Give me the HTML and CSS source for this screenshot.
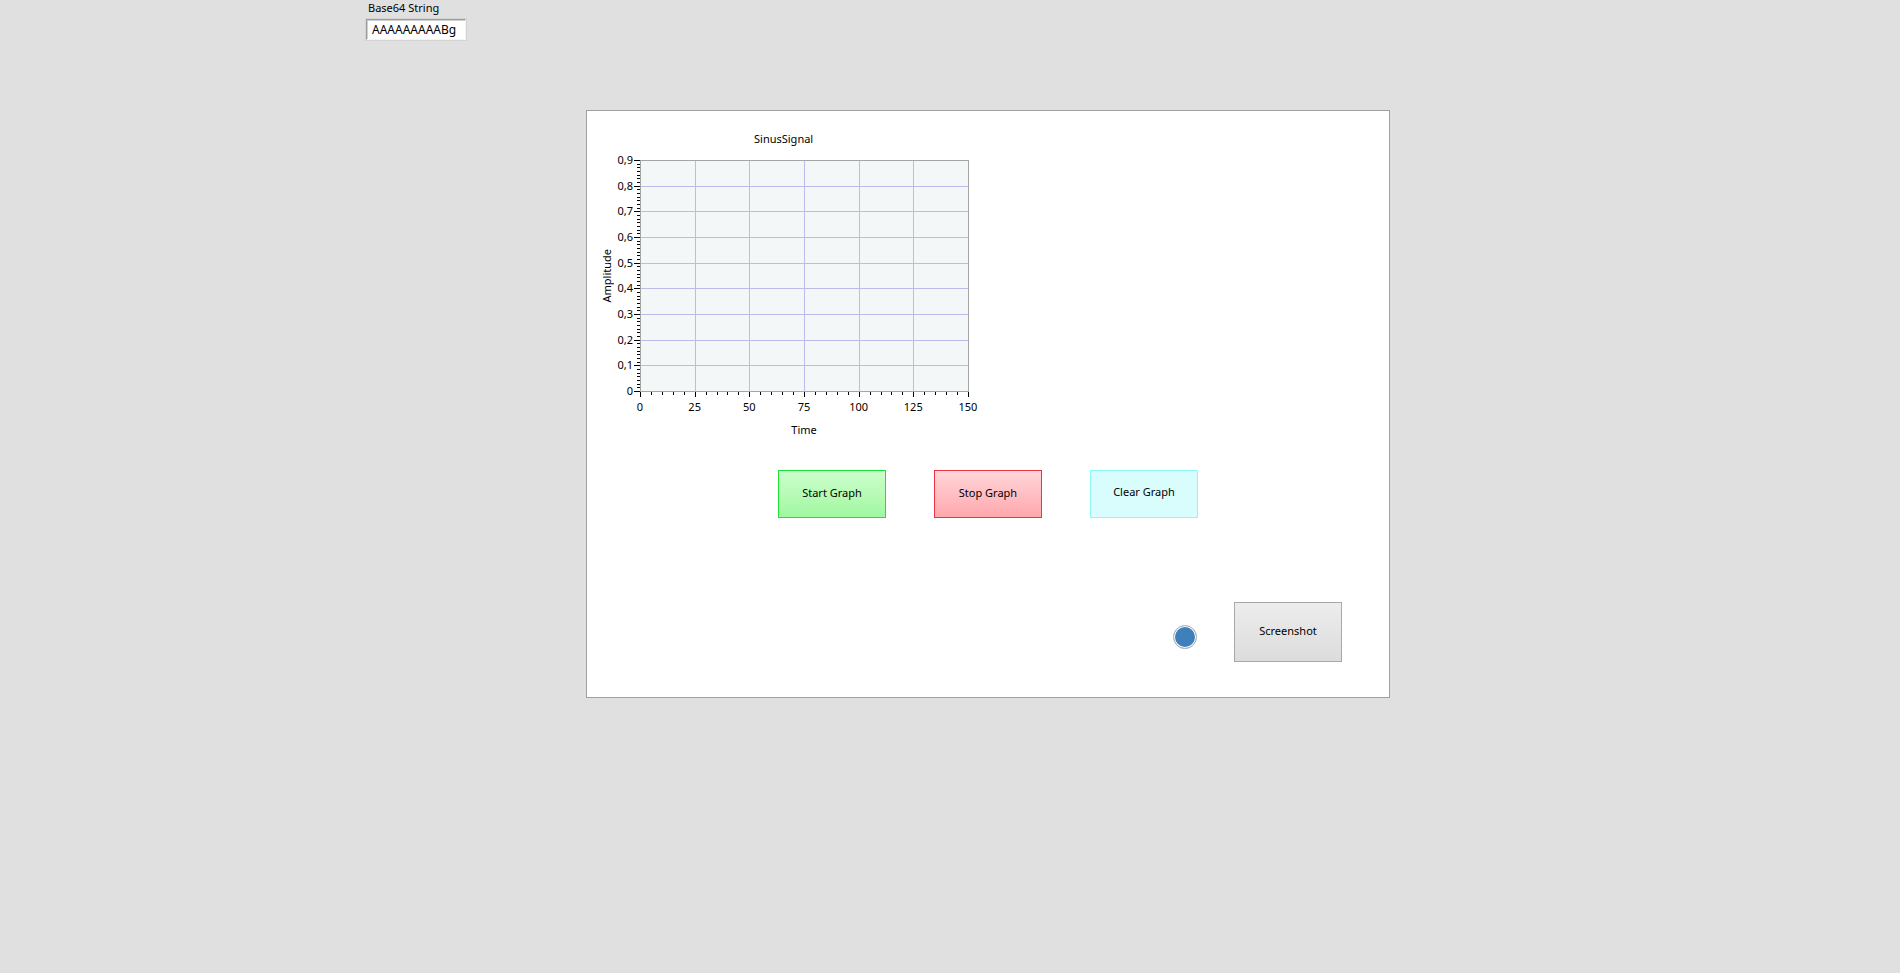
FILE: index.html
```html
<!DOCTYPE html>
<html>
<head>
<meta charset="utf-8">
<title>SinusSignal</title>
<link rel="stylesheet" href="styles.css">
</head>
<body>
<div class="string-ctl">
  <div class="ctl-label">Base64 String</div>
  <div class="string-box">AAAAAAAAABg</div>
</div>
<div class="panel">
  <div class="chart-title">SinusSignal</div>
  <div class="chart-body">
    <div class="y-title"><span>Amplitude</span></div>
    <div class="y-labels">
      <span>0,9</span><span>0,8</span><span>0,7</span><span>0,6</span><span>0,5</span><span>0,4</span><span>0,3</span><span>0,2</span><span>0,1</span><span>0</span>
    </div>
    <div class="plot-col">
      <svg class="plot" width="336" height="239" viewBox="634 160 336 239" shape-rendering="crispEdges">
        <rect x="640.5" y="160.5" width="328" height="231" fill="#f4f7f8" stroke="none"/>
        <path stroke="#bcbcec" stroke-width="1" fill="none" d="M695.5 161V391M749.5 161V391M804.5 161V391M859.5 161V391M913.5 161V391M641 186.5H968M641 211.5H968M641 237.5H968M641 263.5H968M641 288.5H968M641 314.5H968M641 340.5H968M641 365.5H968"/>
        <rect x="640.5" y="160.5" width="328" height="231" fill="none" stroke="#a4a4a4" stroke-width="1"/>
        <path stroke="#000" stroke-width="1" fill="none" d="M634 160.5h6M634 186.5h6M634 211.5h6M634 237.5h6M634 263.5h6M634 288.5h6M634 314.5h6M634 340.5h6M634 365.5h6M634 391.5h6
        M637 164.5h3M637 167.5h3M637 171.5h3M637 175.5h3M637 178.5h3M637 182.5h3
        M637 189.5h3M637 193.5h3M637 197.5h3M637 200.5h3M637 204.5h3M637 208.5h3
        M637 215.5h3M637 219.5h3M637 222.5h3M637 226.5h3M637 230.5h3M637 233.5h3
        M637 241.5h3M637 244.5h3M637 248.5h3M637 252.5h3M637 255.5h3M637 259.5h3
        M637 266.5h3M637 270.5h3M637 274.5h3M637 277.5h3M637 281.5h3M637 285.5h3
        M637 292.5h3M637 296.5h3M637 299.5h3M637 303.5h3M637 307.5h3M637 310.5h3
        M637 318.5h3M637 321.5h3M637 325.5h3M637 329.5h3M637 332.5h3M637 336.5h3
        M637 343.5h3M637 347.5h3M637 351.5h3M637 354.5h3M637 358.5h3M637 362.5h3
        M637 369.5h3M637 373.5h3M637 376.5h3M637 380.5h3M637 384.5h3M637 387.5h3
        M640.5 392v5M695.5 392v5M749.5 392v5M804.5 392v5M859.5 392v5M913.5 392v5M968.5 392v5
        M651.5 392v3M662.5 392v3M673.5 392v3M684.5 392v3
        M706.5 392v3M717.5 392v3M727.5 392v3M738.5 392v3
        M760.5 392v3M771.5 392v3M782.5 392v3M793.5 392v3
        M815.5 392v3M826.5 392v3M837.5 392v3M848.5 392v3
        M870.5 392v3M881.5 392v3M891.5 392v3M902.5 392v3
        M924.5 392v3M935.5 392v3M946.5 392v3M957.5 392v3"/>
      </svg>
      <div class="x-labels">
        <span>0</span><span>25</span><span>50</span><span>75</span><span>100</span><span>125</span><span>150</span>
      </div>
      <div class="x-title">Time</div>
    </div>
  </div>
  <div class="btn-row">
    <button class="btn btn-start">Start Graph</button>
    <button class="btn btn-stop">Stop Graph</button>
    <button class="btn btn-clear">Clear Graph</button>
  </div>
  <div class="bottom-row">
    <span class="led"></span>
    <button class="btn btn-shot">Screenshot</button>
  </div>
</div>
</body>
</html>
```

FILE: styles.css
```css
html, body {
  margin: 0;
  padding: 0;
}
body {
  width: 1900px;
  height: 973px;
  overflow: hidden;
  background: #e0e0e0;
  font-family: "Noto Sans", "Open Sans", sans-serif;
  font-size: 11px;
  color: #000;
}

.string-ctl {
  margin-left: 366px;
}
.ctl-label {
  line-height: 16px;
  padding-left: 2px;
  white-space: nowrap;
}
.string-box {
  margin-top: 3px;
  width: 100px;
  height: 21px;
  box-sizing: border-box;
  background: #fff;
  border: 1px solid;
  border-color: #9c9c9c #f4f4f4 #f4f4f4 #9c9c9c;
  box-shadow: inset 1px 1px 0 #d0d0d0, 0 0 0 1px #d4d4d4;
  font-size: 12px;
  line-height: 19px;
  padding-left: 5px;
  white-space: nowrap;
  overflow: hidden;
}

.panel {
  margin-top: 70px;
  margin-left: 586px;
  width: 804px;
  height: 588px;
  box-sizing: border-box;
  border: 1px solid #a0a0a0;
  background: #fff;
  padding-top: 19px;
}

.chart-title {
  margin-left: 167px;
  line-height: 17px;
  white-space: nowrap;
}
.chart-body {
  display: flex;
  align-items: flex-start;
  margin-top: 6px;
}
.y-title {
  margin-left: 13px;
  width: 14px;
  height: 245px;
  display: flex;
  align-items: center;
  justify-content: center;
}
.y-title span {
  writing-mode: vertical-rl;
  transform: rotate(180deg);
  line-height: 14px;
  white-space: nowrap;
}
.y-labels {
  width: 19px;
  height: 245px;
  display: flex;
  flex-direction: column;
  justify-content: space-between;
  align-items: flex-end;
  line-height: 14px;
}
.y-labels span {
  white-space: nowrap;
}
.plot-col {
  margin-left: 1px;
  display: flex;
  flex-direction: column;
}
.plot {
  display: block;
  margin-top: 7px;
}
.x-labels {
  display: flex;
  justify-content: space-between;
  width: 358px;
  margin-left: -9px;
  line-height: 15px;
}
.x-labels span {
  width: 30px;
  text-align: center;
}
.x-title {
  width: 328px;
  margin-left: 6px;
  margin-top: 9px;
  line-height: 14px;
  text-align: center;
}

.btn-row {
  display: flex;
  gap: 48px;
  margin-left: 191px;
  margin-top: 33px;
}
.btn {
  width: 108px;
  height: 48px;
  box-sizing: border-box;
  padding: 0 0 3px;
  margin: 0;
  border: 1px solid;
  font-family: inherit;
  font-size: 11px;
  color: #000;
}
.btn-start {
  border-color: #20e232;
  background: linear-gradient(#cdfecd, #a0f8a0);
}
.btn-stop {
  border-color: #ee3444;
  background: linear-gradient(#ffd6da, #ffa8ad);
}
.btn-clear {
  border-color: #8cf8f8;
  background: #d9fcfc;
  padding-bottom: 5px;
}

.bottom-row {
  display: flex;
  align-items: flex-start;
  margin-top: 84px;
  margin-left: 586px;
}
.led {
  width: 24px;
  height: 24px;
  box-sizing: border-box;
  margin-top: 23px;
  border-radius: 50%;
  border: 1px solid #bcbcbc;
  box-shadow: inset 0 0 0 1px #fff;
  background: #3f7fba;
}
.btn-shot {
  margin-left: 37px;
  height: 60px;
  padding-bottom: 4px;
  border-color: #a8a8a8;
  background: linear-gradient(#ededed, #dcdcdc);
}
```
